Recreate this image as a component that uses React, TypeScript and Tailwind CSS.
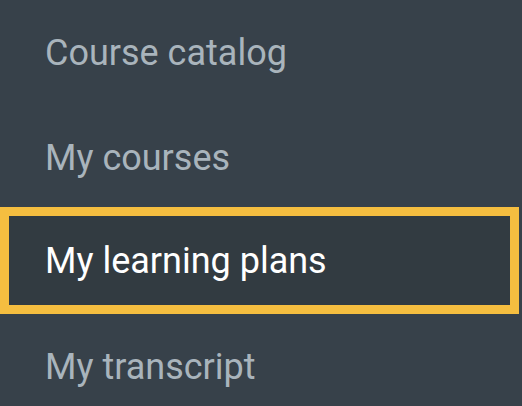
const items = [
  { label: 'Course catalog', active: false },
  { label: 'My courses', active: false },
  { label: 'My learning plans', active: true },
  { label: 'My transcript', active: false },
]

export default function App() {
  return (
    <div className="h-[406px] w-[522px] overflow-hidden bg-[#37414a] font-['Roboto',sans-serif]">
      <nav className="flex w-[519px] flex-col">
        {items.map((item) => (
          <a
            key={item.label}
            href="#"
            className={
              item.active
                ? '-mt-[3px] flex h-[107px] items-center border-[9px] border-[#f5be40] bg-[#323b41] pl-[36px] text-[36px] text-white'
                : 'flex h-[105px] items-center border-[9px] border-transparent pl-[36px] text-[36px] text-[#a9b4bc]'
            }
          >
            {item.label}
          </a>
        ))}
      </nav>
    </div>
  )
}
